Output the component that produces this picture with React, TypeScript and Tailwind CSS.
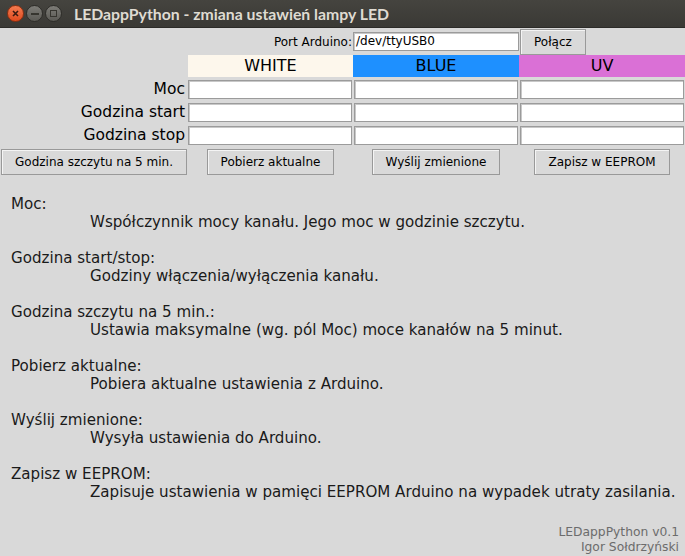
import React from "react"

const font = { fontFamily: '"DejaVu Sans", Verdana, sans-serif' }

const help = [
  ["Moc:", "Współczynnik mocy kanału. Jego moc w godzinie szczytu."],
  ["Godzina start/stop:", "Godziny włączenia/wyłączenia kanału."],
  ["Godzina szczytu na 5 min.:", "Ustawia maksymalne (wg. pól Moc) moce kanałów na 5 minut."],
  ["Pobierz aktualne:", "Pobiera aktualne ustawienia z Arduino."],
  ["Wyślij zmienione:", "Wysyła ustawienia do Arduino."],
  ["Zapisz w EEPROM:", "Zapisuje ustawienia w pamięci EEPROM Arduino na wypadek utraty zasilania."],
]

const rows = ["Moc", "Godzina start", "Godzina stop"]

function Entry({ value = "" }: { value?: string }) {
  return (
    <div className="h-[19px] w-full bg-white border border-[#9b9b9b] shadow-[inset_1px_1px_0_#c8c8c8] text-[12px] leading-[17px] px-[2px] text-black">
      {value}
    </div>
  )
}

function TkButton({ children }: { children: React.ReactNode }) {
  return (
    <div className="h-[26px] flex items-center justify-center px-[13px] bg-[#d9d9d9] border border-[#999] shadow-[inset_1px_1px_0_#f4f4f4] text-[12px] text-black whitespace-nowrap">
      {children}
    </div>
  )
}

function TitleBar() {
  return (
    <div className="h-[28px] flex items-center bg-gradient-to-b from-[#45443f] to-[#3a3935] border-b border-[#2c2b28]">
      <div className="flex items-center gap-[2px] pl-[7px]">
        <div className="w-[17px] h-[17px] rounded-full bg-gradient-to-b from-[#f37a4f] to-[#df4a1c] border border-[#8e2f10] flex items-center justify-center">
          <svg width="7" height="7" viewBox="0 0 7 7">
            <path d="M1 1L6 6M6 1L1 6" stroke="#3a1a10" strokeWidth="1.6" />
          </svg>
        </div>
        <div className="w-[17px] h-[17px] rounded-full bg-gradient-to-b from-[#7d7c77] to-[#5b5a55] border border-[#2e2d29] flex items-center justify-center">
          <div className="w-[8px] h-[2px] bg-[#36352f]" />
        </div>
        <div className="w-[17px] h-[17px] rounded-full bg-gradient-to-b from-[#7d7c77] to-[#5b5a55] border border-[#2e2d29] flex items-center justify-center">
          <div className="w-[7px] h-[7px] border-[1.5px] border-[#36352f]" />
        </div>
      </div>
      <div
        className="pl-[12px] text-[15.8px] font-bold text-[#dfdbd2] whitespace-nowrap"
        style={{ fontFamily: 'Lato, "Open Sans", sans-serif' }}
      >
        LEDappPython - zmiana ustawień lampy LED
      </div>
    </div>
  )
}

export default function App() {
  return (
    <div className="w-[685px] h-[556px] bg-[#d9d9d9] flex flex-col overflow-hidden text-black" style={font}>
      <TitleBar />

      <div className="grid grid-cols-[188px_165px_166px_166px]">
        {/* Port */}
        <div className="h-[27px]" />
        <div className="h-[27px] flex items-center justify-end pr-[1px] text-[12px] whitespace-nowrap">
          Port Arduino:
        </div>
        <div className="h-[27px] flex items-center">
          <Entry value="/dev/ttyUSB0" />
        </div>
        <div className="h-[27px] flex items-center pl-[1px]">
          <TkButton>Połącz</TkButton>
        </div>

        {/* Header */}
        <div className="h-[23px]" />
        <div className="h-[23px] pb-[1px]">
          <div className="h-full bg-[#fdf7ec] flex items-center justify-center text-[16px]">WHITE</div>
        </div>
        <div className="h-[23px] pb-[1px]">
          <div className="h-full bg-[#1e90ff] flex items-center justify-center text-[16px]">BLUE</div>
        </div>
        <div className="h-[23px] pb-[1px]">
          <div className="h-full bg-[#da70d6] flex items-center justify-center text-[16px]">UV</div>
        </div>

        {/* Entries */}
        {rows.map((r) => (
          <React.Fragment key={r}>
            <div className="h-[23px] flex items-center justify-end pr-[3px] text-[15.5px] whitespace-nowrap">{r}</div>
            <div className="h-[23px] pt-[2px] pr-[1px]">
              <Entry />
            </div>
            <div className="h-[23px] pt-[2px] px-[1px]">
              <Entry />
            </div>
            <div className="h-[23px] pt-[2px] px-[1px]">
              <Entry />
            </div>
          </React.Fragment>
        ))}

        {/* Buttons */}
        <div className="h-[28px] flex items-center justify-center pt-[1px]">
          <TkButton>Godzina szczytu na 5 min.</TkButton>
        </div>
        <div className="h-[28px] flex items-center justify-center pt-[1px]">
          <TkButton>Pobierz aktualne</TkButton>
        </div>
        <div className="h-[28px] flex items-center justify-center pt-[1px]">
          <TkButton>Wyślij zmienione</TkButton>
        </div>
        <div className="h-[28px] flex items-center justify-center pt-[1px]">
          <TkButton>Zapisz w EEPROM</TkButton>
        </div>
      </div>

      {/* Help text */}
      <div className="mt-[20px] pl-[11px] text-[15.1px] leading-[18px] text-[#1a1a1a] flex flex-col gap-[18px]">
        {help.map(([title, desc]) => (
          <div key={title}>
            <div className="whitespace-nowrap">{title}</div>
            <div className="pl-[79px] whitespace-nowrap">{desc}</div>
          </div>
        ))}
      </div>

      <div className="mt-auto pr-[6px] pb-[1px] text-right text-[12.3px] leading-[15px] text-[#6c6c6c]">
        <div>LEDappPython v0.1</div>
        <div>Igor Sołdrzyński</div>
      </div>
    </div>
  )
}
